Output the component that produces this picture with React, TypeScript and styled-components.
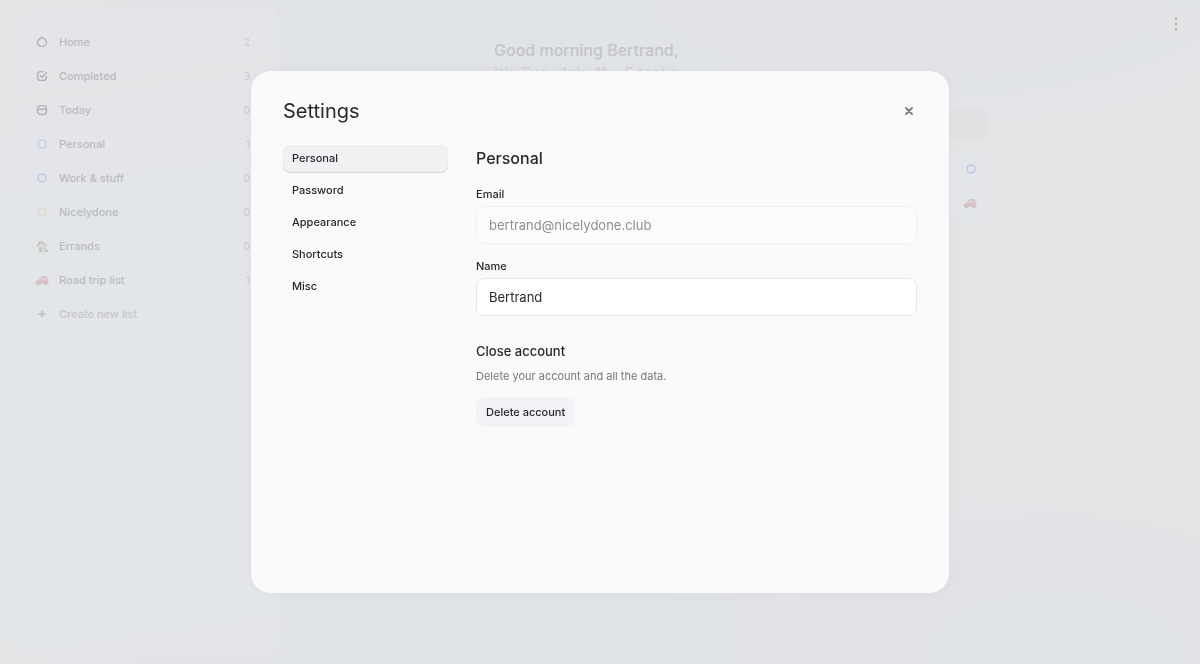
import React from 'react';
import styled, { createGlobalStyle } from 'styled-components';

const GlobalStyle = createGlobalStyle`
  * { box-sizing: border-box; }
  body {
    margin: 0;
    font-family: Inter, "Liberation Sans", sans-serif;
    color: #26282b;
    -webkit-font-smoothing: antialiased;
  }
  h1, h2, h3, p, ul { margin: 0; padding: 0; font-weight: 500; }
  ul { list-style: none; }
  button, input { font: inherit; color: inherit; }
`;

const Page = styled.div`
  min-height: 100vh;
  display: flex;
  background:
    radial-gradient(ellipse 36% 20% at 76% 0%, #dfe1e6 0%, #e1e4e7 70%, rgba(225, 229, 232, 0) 100%),
    radial-gradient(ellipse 26% 26% at 88% 100%, #dee3e6 0%, #e0e2e6 60%, rgba(225, 227, 230, 0) 100%),
    linear-gradient(90deg, #e4e4e4 0%, #e3e4e5 4%, #dfe3e7 25%, #e0e3e6 60%, #e3e4e6 82%, #e4e4e5 100%);
`;

const Sidebar = styled.nav`
  width: 274px;
  flex: none;
  margin: 6px 0 6px 7px;
  padding: 19px 31px 19px 28px;
  border-radius: 18px;
  background: linear-gradient(172deg, #e3e5e7 0%, #e5e5e8 14%, #e2e6e9 32%, #e2e6e8 90%, #e3e4e8 100%);
`;

const ListLink = styled.a<{ $muted?: boolean }>`
  height: 34px;
  display: flex;
  align-items: center;
  gap: 10px;
  font-size: 11px;
  font-weight: 500;
  text-decoration: none;
  color: ${(p) => (p.$muted ? '#c5c8cb' : '#b9bcbf')};
`;

const IconSlot = styled.span<{ $muted?: boolean }>`
  width: 14px;
  display: flex;
  justify-content: center;
  color: ${(p) => (p.$muted ? '#babdc0' : '#b0b3b6')};
`;

const Count = styled.span`
  margin-left: auto;
  font-size: 10px;
  color: #cbced1;
`;

const Main = styled.main`
  flex: 1;
  position: relative;
  display: flex;
  justify-content: center;
  padding: 39px 24px;
`;

const Feed = styled.div`
  width: 100%;
  max-width: 493px;
`;

const Greeting = styled.h2`
  font-size: 16px;
  line-height: 23px;
  color: #c2c5c8;
`;

const Summary = styled(Greeting).attrs({ as: 'p' })`
  color: #d0d3d6;
`;

const AddBar = styled.div`
  height: 30px;
  margin: 24px 0 13px;
  border-radius: 8px;
  background: #dfe1e3;
`;

const TaskCard = styled.div`
  height: 33px;
  margin-bottom: 2px;
  padding: 0 10px;
  display: flex;
  align-items: center;
  justify-content: flex-end;
  border-radius: 8px;
  background: #e3e6e9;
`;

const MoreButton = styled.button`
  position: absolute;
  top: 11px;
  right: 11px;
  width: 26px;
  height: 26px;
  display: grid;
  place-items: center;
  padding: 0;
  border: 0;
  border-radius: 6px;
  background: #e1e3e4;
  color: #b4b6b9;
`;

const Overlay = styled.div`
  position: fixed;
  inset: 0;
  display: grid;
  place-items: center;
  padding: 24px;
`;

const Dialog = styled.section`
  width: 100%;
  max-width: 698px;
  min-height: min(522px, 100%);
  padding: 24px 32px 32px;
  border-radius: 20px;
  background: rgba(250, 252, 251, 0.95);
  box-shadow: 0 0 12px rgba(60, 70, 90, 0.03);
`;

const DialogHeader = styled.header`
  height: 32px;
  display: flex;
  align-items: center;
  justify-content: space-between;
`;

const DialogTitle = styled.h1`
  font-size: 20px;
  font-weight: 400;
`;

const CloseButton = styled.button`
  width: 16px;
  height: 16px;
  display: grid;
  place-items: center;
  padding: 0;
  border: 0;
  background: none;
  color: #77797c;
`;

const DialogBody = styled.div`
  display: grid;
  grid-template-columns: 165px 1fr;
  gap: 28px;
  padding-top: 18px;
`;

const Tabs = styled.div`
  display: flex;
  flex-direction: column;
  gap: 4px;
`;

const Tab = styled.button<{ $active?: boolean }>`
  height: 28px;
  padding: 0 9px 2px;
  border: 0;
  border-radius: 7px;
  text-align: left;
  font-size: 11px;
  font-weight: 500;
  background: ${(p) => (p.$active ? '#f0f1f3' : 'transparent')};
  box-shadow: ${(p) => (p.$active ? 'inset 0 -1px 0 #d9dadd, inset 0 0 0 1px #edeef0' : 'none')};
`;

const Panel = styled.form``;

const PanelTitle = styled.h2`
  font-size: 16px;
  line-height: 26px;
`;

const Field = styled.div`
  display: flex;
  flex-direction: column;
  gap: 4px;
  padding-top: 14px;
  ${PanelTitle} + & {
    padding-top: 15px;
  }
`;

const Label = styled.label`
  font-size: 11px;
  line-height: 16px;
  font-weight: 500;
`;

const TextInput = styled.input`
  width: 100%;
  height: 38px;
  padding: 0 12px;
  border: 1px solid #e6e7e9;
  border-radius: 8px;
  font-size: 13px;
  background: #fff;
  outline: 0;
  &:disabled {
    color: #8e9093;
    border-color: #f0f1f2;
    background: #fbfcfc;
  }
`;

const SectionTitle = styled.h3`
  padding-top: 25px;
  font-size: 13px;
  line-height: 20px;
`;

const Description = styled.p`
  padding: 7px 0 14px;
  font-size: 11px;
  line-height: 16px;
  font-weight: 400;
  color: #75777b;
`;

const DeleteButton = styled.button`
  height: 28px;
  padding: 0 10px;
  border: 0;
  border-radius: 6px;
  font-size: 11px;
  font-weight: 500;
  background: #f2f3f7;
`;

const lineProps = {
  width: 12,
  height: 12,
  viewBox: '0 0 12 12',
  fill: 'none',
  stroke: 'currentColor',
  strokeWidth: 1.4,
  strokeLinecap: 'round' as const,
  strokeLinejoin: 'round' as const,
  'aria-hidden': true,
};

const HomeIcon = () => (
  <svg {...lineProps}>
    <path d="M4.900 2a1.700 1.700 0 0 1 2.200 0l2.200 1.900c.8.7 1.200 1.500 1.200 2.500a4 4 0 0 1-4 4h-1a4 4 0 0 1-4-4c0-1 .4-1.800 1.200-2.500z" />
  </svg>
);

const CheckIcon = () => (
  <svg {...lineProps}>
    <path d="M7 1.600H4.600a3 3 0 0 0-3 3v2.800a3 3 0 0 0 3 3h2.800a3 3 0 0 0 3-3v-.600M4.200 5.400l1.900 1.900 4.400-4.700" />
  </svg>
);

const CalendarIcon = () => (
  <svg {...lineProps}>
    <rect x="1.600" y="1.600" width="8.800" height="8.800" rx="3" />
    <path d="M1.600 5.300h8.800" />
  </svg>
);

const BoxIcon = ({ color }: { color: string }) => (
  <svg {...lineProps} stroke={color}>
    <rect x="2.200" y="2.200" width="7.600" height="7.600" rx="3" />
  </svg>
);

const HouseIcon = () => (
  <svg width="13" height="13" viewBox="0 0 13 13" aria-hidden="true">
    <path d="M2.300 6 6 2.800 9.800 6v6H2.300z" fill="#dbd9d4" />
    <path d="M0.900 6.300 6 1.800l5.100 4.500" fill="none" stroke="#cfbfba" strokeWidth="1.400" />
    <path d="M2.500 1.500h1.600v2H2.500z" fill="#cbb9b5" />
    <path d="M3.400 7.700h1.900V12H3.400z" fill="#c9bbb4" />
    <path d="M6.800 7.300h2v1.800h-2z" fill="#c4cdd5" />
    <path d="M8.800 10.500a1.600 1.600 0 0 1 3.200 0V12H8.800z" fill="#c4cfc4" />
  </svg>
);

const CarIcon = () => (
  <svg width="14" height="11" viewBox="0 0 14 11" aria-hidden="true">
    <path d="M.6 9V7.200C.6 5.800 1.700 5.200 3.300 4.900L5.500 1.900c.4-.6.900-.8 1.600-.8h3.200c.8 0 1.300.3 1.600 1l.9 2.300c.4.4.6.9.6 1.500V9z" fill="#d9c3c6" />
    <path d="M5.300 4.500 6.500 2.700h1.100v1.800zM8.500 2.700h1.800l.7 1.800H8.500z" fill="#dadde1" />
    <circle cx="3.400" cy="9" r="1.400" fill="#c3c1c5" />
    <circle cx="10.800" cy="9" r="1.400" fill="#c3c1c5" />
  </svg>
);

const PlusIcon = () => (
  <svg {...lineProps}>
    <path d="M6 3v6M3 6h6" />
  </svg>
);

const MoreIcon = () => (
  <svg width="4" height="14" viewBox="0 0 4 14" fill="currentColor" aria-hidden="true">
    <circle cx="2" cy="2" r="1.300" />
    <circle cx="2" cy="7" r="1.300" />
    <circle cx="2" cy="12" r="1.300" />
  </svg>
);

const CloseIcon = () => (
  <svg width="10" height="10" viewBox="0 0 10 10" fill="none" stroke="currentColor" strokeWidth="1.800" strokeLinecap="round" aria-hidden="true">
    <path d="M2 2l6 6M8 2 2 8" />
  </svg>
);

const lists = [
  { name: 'Home', count: 2, icon: <HomeIcon /> },
  { name: 'Completed', count: 3, icon: <CheckIcon /> },
  { name: 'Today', count: 0, icon: <CalendarIcon /> },
  { name: 'Personal', count: 1, icon: <BoxIcon color="#c6d1e6" /> },
  { name: 'Work & stuff', count: 0, icon: <BoxIcon color="#c3c9e6" /> },
  { name: 'Nicelydone', count: 0, icon: <BoxIcon color="#dfdac8" /> },
  { name: 'Errands', count: 0, icon: <HouseIcon /> },
  { name: 'Road trip list', count: 1, icon: <CarIcon /> },
];

const tabs = ['Personal', 'Password', 'Appearance', 'Shortcuts', 'Misc'];

export default function App() {
  return (
    <>
      <GlobalStyle />
      <Page inert>
        <Sidebar>
          <ul>
            {lists.map((l) => (
              <li key={l.name}>
                <ListLink href="#">
                  <IconSlot>{l.icon}</IconSlot>
                  {l.name}
                  <Count>{l.count}</Count>
                </ListLink>
              </li>
            ))}
            <li>
              <ListLink href="#" $muted>
                <IconSlot $muted><PlusIcon /></IconSlot>
                Create new list
              </ListLink>
            </li>
          </ul>
        </Sidebar>
        <Main>
          <Feed>
            <Greeting>Good morning Bertrand,</Greeting>
            <Summary>It’s Tue, July 11 – 5 tasks</Summary>
            <AddBar />
            <TaskCard><BoxIcon color="#bccce4" /></TaskCard>
            <TaskCard><CarIcon /></TaskCard>
          </Feed>
          <MoreButton aria-label="More options"><MoreIcon /></MoreButton>
        </Main>
      </Page>
      <Overlay>
        <Dialog role="dialog" aria-modal="true" aria-labelledby="settings-title">
          <DialogHeader>
            <DialogTitle id="settings-title">Settings</DialogTitle>
            <CloseButton aria-label="Close"><CloseIcon /></CloseButton>
          </DialogHeader>
          <DialogBody>
            <Tabs>
              {tabs.map((t, i) => (
                <Tab key={t} type="button" $active={i === 0}>{t}</Tab>
              ))}
            </Tabs>
            <Panel>
              <PanelTitle>Personal</PanelTitle>
              <Field>
                <Label htmlFor="email">Email</Label>
                <TextInput id="email" type="email" defaultValue="bertrand@nicelydone.club" disabled />
              </Field>
              <Field>
                <Label htmlFor="name">Name</Label>
                <TextInput id="name" defaultValue="Bertrand" />
              </Field>
              <SectionTitle>Close account</SectionTitle>
              <Description>Delete your account and all the data.</Description>
              <DeleteButton type="button">Delete account</DeleteButton>
            </Panel>
          </DialogBody>
        </Dialog>
      </Overlay>
    </>
  );
}
